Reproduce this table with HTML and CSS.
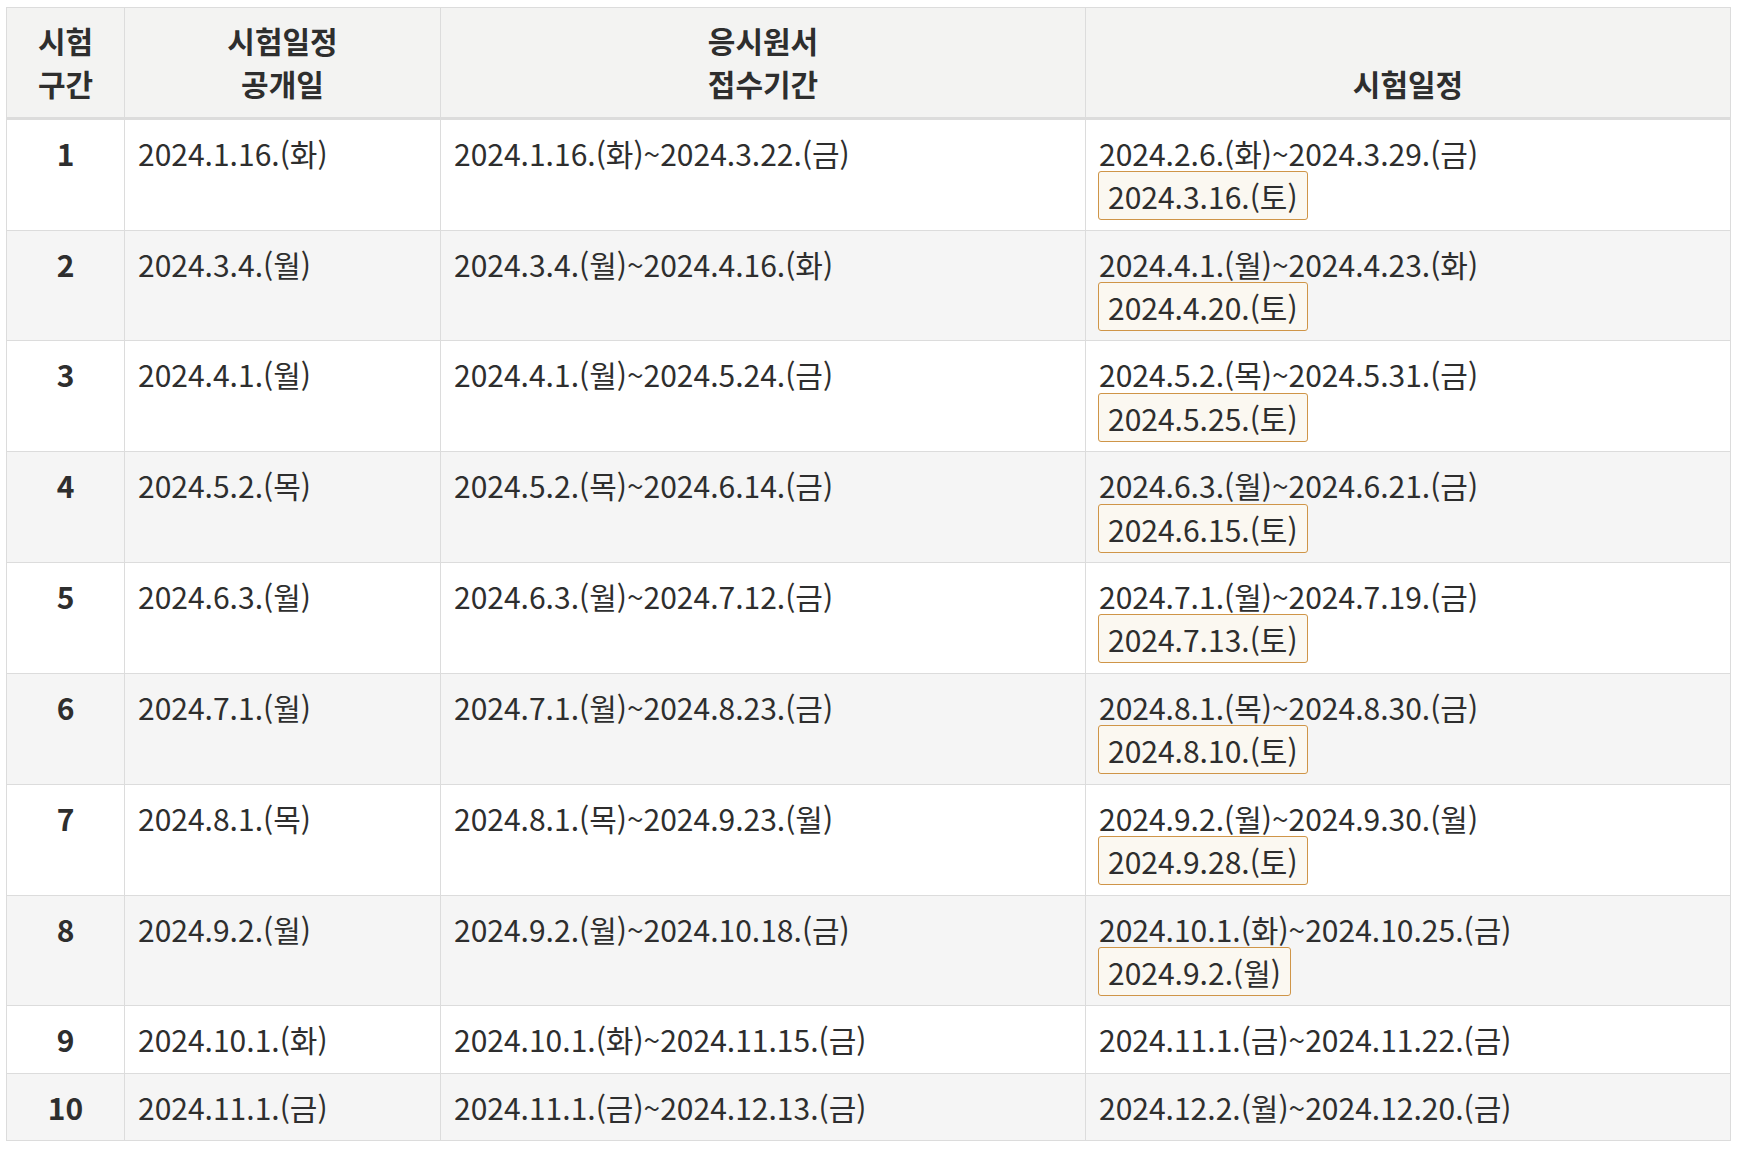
FILE: index.html
```html
<!DOCTYPE html>
<html lang="ko">
<head>
<meta charset="utf-8">
<title>시험일정</title>
<link rel="stylesheet" href="styles.css">
</head>
<body>
<table class="schedule">
  <colgroup>
    <col class="c-no">
    <col class="c-open">
    <col class="c-apply">
    <col class="c-exam">
  </colgroup>
  <thead>
    <tr>
      <th>시험<br>구간</th>
      <th>시험일정<br>공개일</th>
      <th>응시원서<br>접수기간</th>
      <th>시험일정</th>
    </tr>
  </thead>
  <tbody>
    <tr><td class="no">1</td><td>2024.1.16.(화)</td><td>2024.1.16.(화)~2024.3.22.(금)</td><td>2024.2.6.(화)~2024.3.29.(금)<br><span class="tag">2024.3.16.(토)</span></td></tr>
    <tr><td class="no">2</td><td>2024.3.4.(월)</td><td>2024.3.4.(월)~2024.4.16.(화)</td><td>2024.4.1.(월)~2024.4.23.(화)<br><span class="tag">2024.4.20.(토)</span></td></tr>
    <tr><td class="no">3</td><td>2024.4.1.(월)</td><td>2024.4.1.(월)~2024.5.24.(금)</td><td>2024.5.2.(목)~2024.5.31.(금)<br><span class="tag">2024.5.25.(토)</span></td></tr>
    <tr><td class="no">4</td><td>2024.5.2.(목)</td><td>2024.5.2.(목)~2024.6.14.(금)</td><td>2024.6.3.(월)~2024.6.21.(금)<br><span class="tag">2024.6.15.(토)</span></td></tr>
    <tr><td class="no">5</td><td>2024.6.3.(월)</td><td>2024.6.3.(월)~2024.7.12.(금)</td><td>2024.7.1.(월)~2024.7.19.(금)<br><span class="tag">2024.7.13.(토)</span></td></tr>
    <tr><td class="no">6</td><td>2024.7.1.(월)</td><td>2024.7.1.(월)~2024.8.23.(금)</td><td>2024.8.1.(목)~2024.8.30.(금)<br><span class="tag">2024.8.10.(토)</span></td></tr>
    <tr><td class="no">7</td><td>2024.8.1.(목)</td><td>2024.8.1.(목)~2024.9.23.(월)</td><td>2024.9.2.(월)~2024.9.30.(월)<br><span class="tag">2024.9.28.(토)</span></td></tr>
    <tr><td class="no">8</td><td>2024.9.2.(월)</td><td>2024.9.2.(월)~2024.10.18.(금)</td><td>2024.10.1.(화)~2024.10.25.(금)<br><span class="tag">2024.9.2.(월)</span></td></tr>
    <tr><td class="no">9</td><td>2024.10.1.(화)</td><td>2024.10.1.(화)~2024.11.15.(금)</td><td>2024.11.1.(금)~2024.11.22.(금)</td></tr>
    <tr><td class="no">10</td><td>2024.11.1.(금)</td><td>2024.11.1.(금)~2024.12.13.(금)</td><td>2024.12.2.(월)~2024.12.20.(금)</td></tr>
  </tbody>
</table>
</body>
</html>
```

FILE: styles.css
```css
html, body {
  background: #ffffff;
}
body {
  margin: 7px 0 0 6px;
  font-family: "Noto Sans CJK KR", "Noto Sans", sans-serif;
  font-size: 30px;
  color: #2e2e2e;
}
.schedule {
  border-collapse: collapse;
  table-layout: fixed;
  width: 1725px;
  border: 1px solid #dcdcdc;
}
.c-no { width: 118px; }
.c-open { width: 316px; }
.c-apply { width: 645px; }
.c-exam { width: 645px; }

.schedule th,
.schedule td {
  border: 1px solid #dcdcdc;
  padding: 12px 13px 11px 13px;
  line-height: 43.4px;
  vertical-align: top;
  text-align: left;
}
.schedule th {
  background: #f3f3f2;
  font-weight: 700;
  text-align: center;
  vertical-align: bottom;
  padding-top: 11px;
  padding-bottom: 11px;
  border-bottom: 3px solid #dcdcdc;
}
.schedule tbody tr:nth-child(even) td {
  background: #f5f5f5;
}
.schedule td.no {
  text-align: center;
  font-weight: 700;
}
.tag {
  border: 1px solid #cf9548;
  background: #fbf8f1;
  border-radius: 3px;
  padding: 2px 9px 1px 9px;
  margin-left: -1px;
}
```
